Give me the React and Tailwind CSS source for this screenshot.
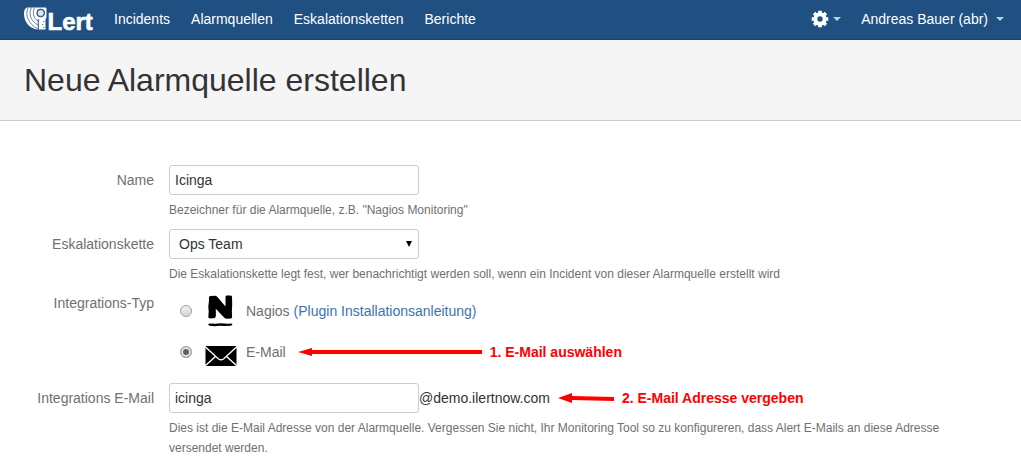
import React from "react";

const navLinks = ["Incidents", "Alarmquellen", "Eskalationsketten", "Berichte"];

function Logo() {
  return (
    <svg viewBox="0 0 76 32" className="h-8 w-[76px]" role="img" aria-label="iLert">
      <path
        d="M3 4.500h18.500q1 0 1 1.500v7.500q0 2-1 2.500v10.500h-7C7 26.500 0 20 0 11 0 7 1 5 3 4.500z"
        fill="#fff"
      />
      <g fill="none" stroke="#205081" strokeWidth="0.7">
        <path d="M4.300 4.500C0.500 11 4 21 14 26" />
        <path d="M7.500 4.500C4 11 7 18.500 14 22" />
        <path d="M10.700 4.500C8 9.500 9.500 15.500 14 18" />
      </g>
      <circle cx="16.700" cy="10" r="3.900" fill="#8ea8c0" stroke="#205081" strokeWidth="1" />
      <circle cx="16.700" cy="10" r="2.600" fill="#dfe6ed" />
      <path d="M14.300 16v10.500" stroke="#205081" strokeWidth="1" fill="none" />
      <path d="M19 18.500h1.500M18 21.500h1.500M19 24.500h1.500" stroke="#205081" strokeWidth="0.700" fill="none" />
      <text
        x="23.500"
        y="26.500"
        fill="#fff"
        stroke="#fff"
        strokeWidth="0.600"
        fontFamily="Liberation Sans, Arial, sans-serif"
        fontSize="24"
        fontWeight="700"
      >
        Lert
      </text>
    </svg>
  );
}

function GearIcon() {
  return (
    <svg viewBox="0 0 18 18" className="size-[18px]" aria-hidden="true">
      <circle cx="9" cy="9" r="4.700" fill="none" stroke="#fff" strokeWidth="4" />
      <g stroke="#fff" strokeWidth="3.600">
        <path d="M9 .7v3M9 14.300v3M.7 9h3M14.300 9h3" />
        <path d="M3.100 3.100l2.200 2.200M12.700 12.700l2.200 2.200M14.900 3.100l-2.200 2.200M5.300 12.700l-2.200 2.200" />
      </g>
    </svg>
  );
}

function Caret() {
  return (
    <svg viewBox="0 0 8 4" className="h-1 w-2" aria-hidden="true">
      <path d="M0 0h8L4 4z" fill="#c0cedb" />
    </svg>
  );
}

function NagiosIcon() {
  return (
    <svg viewBox="0 0 32 34" className="h-[34px] w-8 shrink-0" aria-hidden="true">
      <path
        d="M4 3l1-1 5.500-.2 1.500.8 8.500 10V2.500l1-.9 4.500-.1 1 1 .2 8-.3 7 .2 6-1 1-5 .2-1.500-.8-8.800-9.200.1 7.300-1 2-5 .6-1.600-1 .4-6-.4-5 .6-5z"
        fill="#000"
      />
      <path d="M3 30.500l1.500-1 6 .3 5-.5 7 .5 4-.4 1 1-1.500 1.300-6.500.2-5-.2-5 .5-5-.4z" fill="#000" />
    </svg>
  );
}

function MailIcon() {
  return (
    <svg viewBox="0 0 32 22" className="mt-2 h-[22px] w-8 shrink-0" aria-hidden="true">
      <rect x="0.500" y="1" width="31" height="20" rx="1" fill="#000" />
      <path
        d="M0.500 2l13 12q2.500 1.500 5 0L31.500 2M0.500 20.500l10.500-9.500M31.500 20.500l-10.500-9.500"
        fill="none"
        stroke="#fff"
        strokeWidth="1.400"
      />
    </svg>
  );
}

function Row({ label, htmlFor, id, children }) {
  return (
    <div className="grid grid-cols-[154px_minmax(0,1fr)] gap-x-[15px]">
      {htmlFor ? (
        <label htmlFor={htmlFor} className="pt-[5px] text-right text-[#707070]">
          {label}
        </label>
      ) : (
        <span id={id} className="text-right text-[#707070]">
          {label}
        </span>
      )}
      <div className="min-w-0">{children}</div>
    </div>
  );
}

function Help({ children }) {
  return <p className="mt-[5px] text-xs leading-5 text-[#707070]">{children}</p>;
}

const radioClass =
  "mr-[13px] size-3 shrink-0 appearance-none rounded-full border border-[#a0a0a0] bg-linear-to-b from-[#eeeeee] to-[#d8d8d8] checked:bg-none checked:bg-[#606060] checked:shadow-[inset_0_0_0_2px_#e6e6e6]";
const inputClass =
  "h-[30px] w-[250px] rounded-[3px] border border-[#cccccc] bg-white px-[5px] text-[#333333] outline-none";

export default function App() {
  return (
    <div className="bg-white font-['Liberation_Sans',Arial,sans-serif] text-sm leading-5 text-[#333333]">
      <header className="flex h-10 items-center border-b border-[#2e3d54] bg-[#205081] pr-[17px] pb-px pl-6 text-white">
        <a href="#" className="mr-[14px] flex">
          <Logo />
        </a>
        <nav className="flex flex-1 gap-[21px]">
          {navLinks.map((name) => (
            <a key={name} href="#">
              {name}
            </a>
          ))}
        </nav>
        <button type="button" aria-label="Einstellungen" className="mr-5 flex items-center gap-1">
          <GearIcon />
          <Caret />
        </button>
        <button type="button" className="flex items-center gap-2">
          Andreas Bauer (abr)
          <Caret />
        </button>
      </header>

      <div className="border-b border-[#cccccc] bg-[#f5f5f5] px-6 py-5">
        <h1 className="text-[32px] leading-10">Neue Alarmquelle erstellen</h1>
      </div>

      <form className="flex flex-col gap-[9px] pt-11 pr-10">
        <Row label="Name" htmlFor="name">
          <input id="name" type="text" defaultValue="Icinga" className={inputClass} />
          <Help>Bezeichner für die Alarmquelle, z.B. "Nagios Monitoring"</Help>
        </Row>

        <Row label="Eskalationskette" htmlFor="chain">
          <div className="relative w-[250px]">
            <select
              id="chain"
              className="h-[30px] w-full appearance-none rounded-[3px] border border-[#cccccc] bg-white px-[9px] text-[#333333] outline-none"
            >
              <option>Ops Team</option>
            </select>
            <svg
              viewBox="0 0 6 6"
              className="pointer-events-none absolute top-3 right-[7px] size-1.5"
              aria-hidden="true"
            >
              <path d="M0 0h6L3 6z" fill="#000" />
            </svg>
          </div>
          <Help>
            Die Eskalationskette legt fest, wer benachrichtigt werden soll, wenn ein Incident von dieser
            Alarmquelle erstellt wird
          </Help>
        </Row>

        <Row label="Integrations-Typ" id="type-label">
          <div role="radiogroup" aria-labelledby="type-label" className="flex flex-col gap-[5px] pb-1 pl-[11px]">
            <div className="flex h-9 items-center text-[#707070]">
              <input id="type-nagios" type="radio" name="type" className={radioClass} />
              <label htmlFor="type-nagios" className="flex items-center gap-[9px]">
                <NagiosIcon />
                Nagios
              </label>
              <a href="#" className="ml-1 text-[#3b73af]">
                (Plugin Installationsanleitung)
              </a>
            </div>
            <div className="flex h-9 items-center text-[#707070]">
              <input id="type-mail" type="radio" name="type" defaultChecked className={radioClass} />
              <label htmlFor="type-mail" className="flex items-center gap-[9px]">
                <MailIcon />
                E-Mail
              </label>
              <svg viewBox="0 0 184 10" className="ml-3 h-2.5 w-[184px]" aria-hidden="true">
                <path d="M0 5L14 1v2h170v4H14v2z" fill="#ff0000" />
              </svg>
              <strong className="ml-2 text-[#ff0000]">1. E-Mail auswählen</strong>
            </div>
          </div>
        </Row>

        <Row label="Integrations E-Mail" htmlFor="mail">
          <div className="flex items-center">
            <input id="mail" type="text" defaultValue="icinga" className={inputClass} />
            <span>@demo.ilertnow.com</span>
            <svg viewBox="0 0 56 10" className="ml-2 h-2.5 w-14" aria-hidden="true">
              <path d="M0 5L14 0v3l42 1v4l-42-1v3z" fill="#ff0000" />
            </svg>
            <strong className="ml-2 text-[#ff0000]">2. E-Mail Adresse vergeben</strong>
          </div>
          <Help>
            Dies ist die E-Mail Adresse von der Alarmquelle. Vergessen Sie nicht, Ihr Monitoring Tool so zu
            konfigureren, dass Alert E-Mails an diese Adresse versendet werden.
          </Help>
        </Row>
      </form>
    </div>
  );
}
